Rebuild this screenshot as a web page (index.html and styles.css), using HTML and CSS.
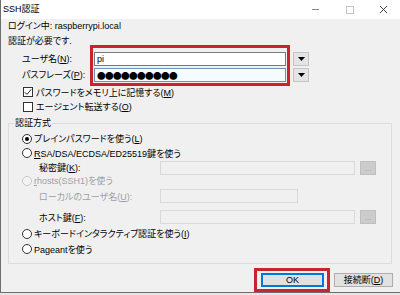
FILE: index.html
```html
<!DOCTYPE html>
<html lang="ja">
<head>
<meta charset="utf-8">
<title>SSH認証</title>
<link rel="stylesheet" href="styles.css">
</head>
<body>
<div class="window">
  <div class="titlebar">
    <span class="title">SSH認証</span>
    <div class="controls">
      <span class="ctl"><svg width="9" height="9" viewBox="0 0 9 9"><line x1="1" y1="4.5" x2="8" y2="4.5" stroke="#8a8a8a" stroke-width="1"/></svg></span>
      <span class="ctl"><svg width="9" height="9" viewBox="0 0 9 9"><rect x="1.5" y="1.5" width="7" height="7" fill="none" stroke="#c4c4c4" stroke-width="1"/></svg></span>
      <span class="ctl"><svg width="9" height="9" viewBox="0 0 9 9"><path d="M1 1 L8 8 M8 1 L1 8" stroke="#404040" stroke-width="1" fill="none"/></svg></span>
    </div>
  </div>
  <div class="content">
    <div class="info">ログイン中: raspberrypi.local</div>
    <div class="info">認証が必要です.</div>
    <div class="frow r1">
      <span class="flabel">ユーザ名(<u>N</u>):</span>
      <div class="field">pi</div>
      <div class="dd"><svg width="7" height="4" viewBox="0 0 7 4"><path d="M0 0 H7 L3.5 4 Z" fill="#000"/></svg></div>
    </div>
    <div class="frow r2">
      <span class="flabel">パスフレーズ(<u>P</u>):</span>
      <div class="field focus"><span class="dots">●●●●●●●●●●</span></div>
      <div class="dd"><svg width="7" height="4" viewBox="0 0 7 4"><path d="M0 0 H7 L3.5 4 Z" fill="#000"/></svg></div>
    </div>
    <div class="check c1">
      <span class="cb"><svg width="8" height="8" viewBox="0 0 8 8"><path d="M0.8 4.2 L3 6.4 L7.2 1.4" fill="none" stroke="#222" stroke-width="1"/></svg></span>
      <span>パスワードをメモリ上に記憶する(<u>M</u>)</span>
    </div>
    <div class="check c2">
      <span class="cb"></span>
      <span>エージェント転送する(<u>O</u>)</span>
    </div>
    <fieldset class="group">
      <legend>認証方式</legend>
      <div class="opt ra"><span class="radio on"></span><span>プレインパスワードを使う(<u>L</u>)</span></div>
      <div class="opt rb"><span class="radio"></span><span><u>R</u>SA/DSA/ECDSA/ED25519鍵を使う</span></div>
      <div class="sub rc"><span class="slabel">秘密鍵(<u>K</u>):</span><div class="dfield wide"></div><div class="more">…</div></div>
      <div class="opt rd disabled"><span class="radio"></span><span><u>r</u>hosts(SSH1)を使う</span></div>
      <div class="sub re"><span class="slabel disabled">ローカルのユーザ名(<u>U</u>):</span><div class="dfield short"></div></div>
      <div class="sub rf"><span class="slabel">ホスト鍵(<u>F</u>):</span><div class="dfield wide"></div><div class="more">…</div></div>
      <div class="opt rg"><span class="radio"></span><span>キーボードインタラクティブ認証を使う(<u>I</u>)</span></div>
      <div class="opt rh"><span class="radio"></span><span>Pageantを使う</span></div>
    </fieldset>
    <div class="buttons">
      <button class="btn default">OK</button>
      <button class="btn">接続断(<u>D</u>)</button>
    </div>
  </div>
  <div class="hl hl-user"></div>
  <div class="hl hl-ok"></div>
</div>
</body>
</html>
```
FILE: styles.css
```css
html, body {
  margin: 0;
  padding: 0;
}
body {
  width: 400px;
  height: 295px;
  background: #e6e6e6;
  font-family: "Liberation Sans", "Noto Sans CJK JP", sans-serif;
  font-size: 9px;
  color: #000;
  font-feature-settings: "palt";
  overflow: hidden;
}
.window {
  position: relative;
  width: 400px;
  height: 293px;
  box-sizing: border-box;
  border-left: 1px solid #6e6e6e;
  border-bottom: 1px solid #6e6e6e;
  background: #f0f0f0;
}
.titlebar {
  height: 19px;
  background: #fff;
  display: flex;
  align-items: center;
  padding-left: 2px;
}
.title {
  flex: 1;
  line-height: 19px;
}
.controls {
  display: flex;
}
.ctl {
  width: 34px;
  height: 19px;
  display: flex;
  align-items: center;
  justify-content: center;
}
.info {
  height: 15px;
  line-height: 15px;
  padding-left: 7px;
}
.frow {
  display: flex;
  align-items: center;
  height: 15px;
  padding-left: 21px;
}
.r1 { margin-top: 2px; }
.r2 { margin-top: 1px; }
.flabel {
  width: 72px;
}
.field {
  width: 192px;
  height: 14px;
  box-sizing: border-box;
  border: 1px solid #7a7a7a;
  background: #fff;
  display: flex;
  align-items: center;
  padding-left: 2px;
  line-height: 12px;
}
.field.focus {
  border-color: #6f8fb3;
  background: #f6fbff;
}
.dots {
  font-family: "Noto Sans CJK JP", sans-serif;
  font-size: 8.6px;
  letter-spacing: -0.6px;
  line-height: 12px;
}
.dd {
  width: 16px;
  height: 14px;
  box-sizing: border-box;
  margin-left: 7px;
  border: 1px solid #c4c4c4;
  background: #e4e4e4;
  display: flex;
  align-items: center;
  justify-content: center;
}
.check {
  display: flex;
  align-items: center;
  padding-left: 22px;
  gap: 3px;
}
.c1 { height: 14px; margin-top: 3px; }
.c2 { height: 15px; }
.cb {
  width: 10px;
  height: 10px;
  box-sizing: border-box;
  border: 1px solid #333;
  background: #fff;
  display: flex;
  align-items: center;
  justify-content: center;
}
.group {
  margin: 2px 0 0 7px;
  padding: 1px 0 4px 0;
  width: 384px;
  box-sizing: border-box;
  border: 1px solid #dcdcdc;
  min-width: 0;
}
.group legend {
  margin-left: 5px;
  padding: 0 1px;
  line-height: 14px;
  height: 14px;
}
.opt {
  display: flex;
  align-items: center;
  padding-left: 13px;
  gap: 2px;
}
.radio {
  width: 10px;
  height: 10px;
  box-sizing: border-box;
  border: 1px solid #333;
  border-radius: 50%;
  background: #fff;
  display: flex;
  align-items: center;
  justify-content: center;
}
.radio.on::after {
  content: "";
  width: 4px;
  height: 4px;
  border-radius: 50%;
  background: #000;
}
.disabled {
  color: #a0a0a0;
}
.disabled .radio {
  border-color: #c8c8c8;
  background: #f4f4f4;
}
.sub {
  display: flex;
  align-items: center;
  padding-left: 30px;
}
.slabel {
  width: 121px;
}
.dfield {
  height: 14px;
  box-sizing: border-box;
  border: 1px solid #d9d9d9;
  background: #f0f0f0;
}
.dfield.wide { width: 195px; }
.dfield.short { width: 138px; }
.more {
  width: 16px;
  height: 14px;
  box-sizing: border-box;
  margin-left: 5px;
  border: 1px solid #bfbfbf;
  background: #cccccc;
  color: #8c8c8c;
  font-size: 7px;
  line-height: 14px;
  text-align: center;
}
.ra { height: 15px; }
.rb { height: 14px; }
.rc { height: 15px; }
.rd { height: 11px; }
.re { height: 20px; }
.rf { height: 22px; }
.rg { height: 11px; }
.rh { height: 20px; }
.buttons {
  display: flex;
  justify-content: flex-end;
  gap: 10px;
  margin-top: 9px;
  padding-right: 7px;
}
.btn {
  height: 14px;
  box-sizing: border-box;
  border: 1px solid #adadad;
  background: #e1e1e1;
  font-family: inherit;
  font-size: 9px;
  padding: 0;
  line-height: 12px;
  color: #000;
}
.btn.default {
  width: 63px;
  border-color: #0078d7;
  box-shadow: inset 0 0 0 1px #0078d7;
}
.btn:not(.default) {
  width: 59px;
}
.hl {
  position: absolute;
  box-sizing: border-box;
  border: 3px solid #c8232f;
}
.hl-user {
  left: 89px;
  top: 45px;
  width: 200px;
  height: 41px;
}
.hl-ok {
  left: 253px;
  top: 268px;
  width: 76px;
  height: 24px;
}
```
